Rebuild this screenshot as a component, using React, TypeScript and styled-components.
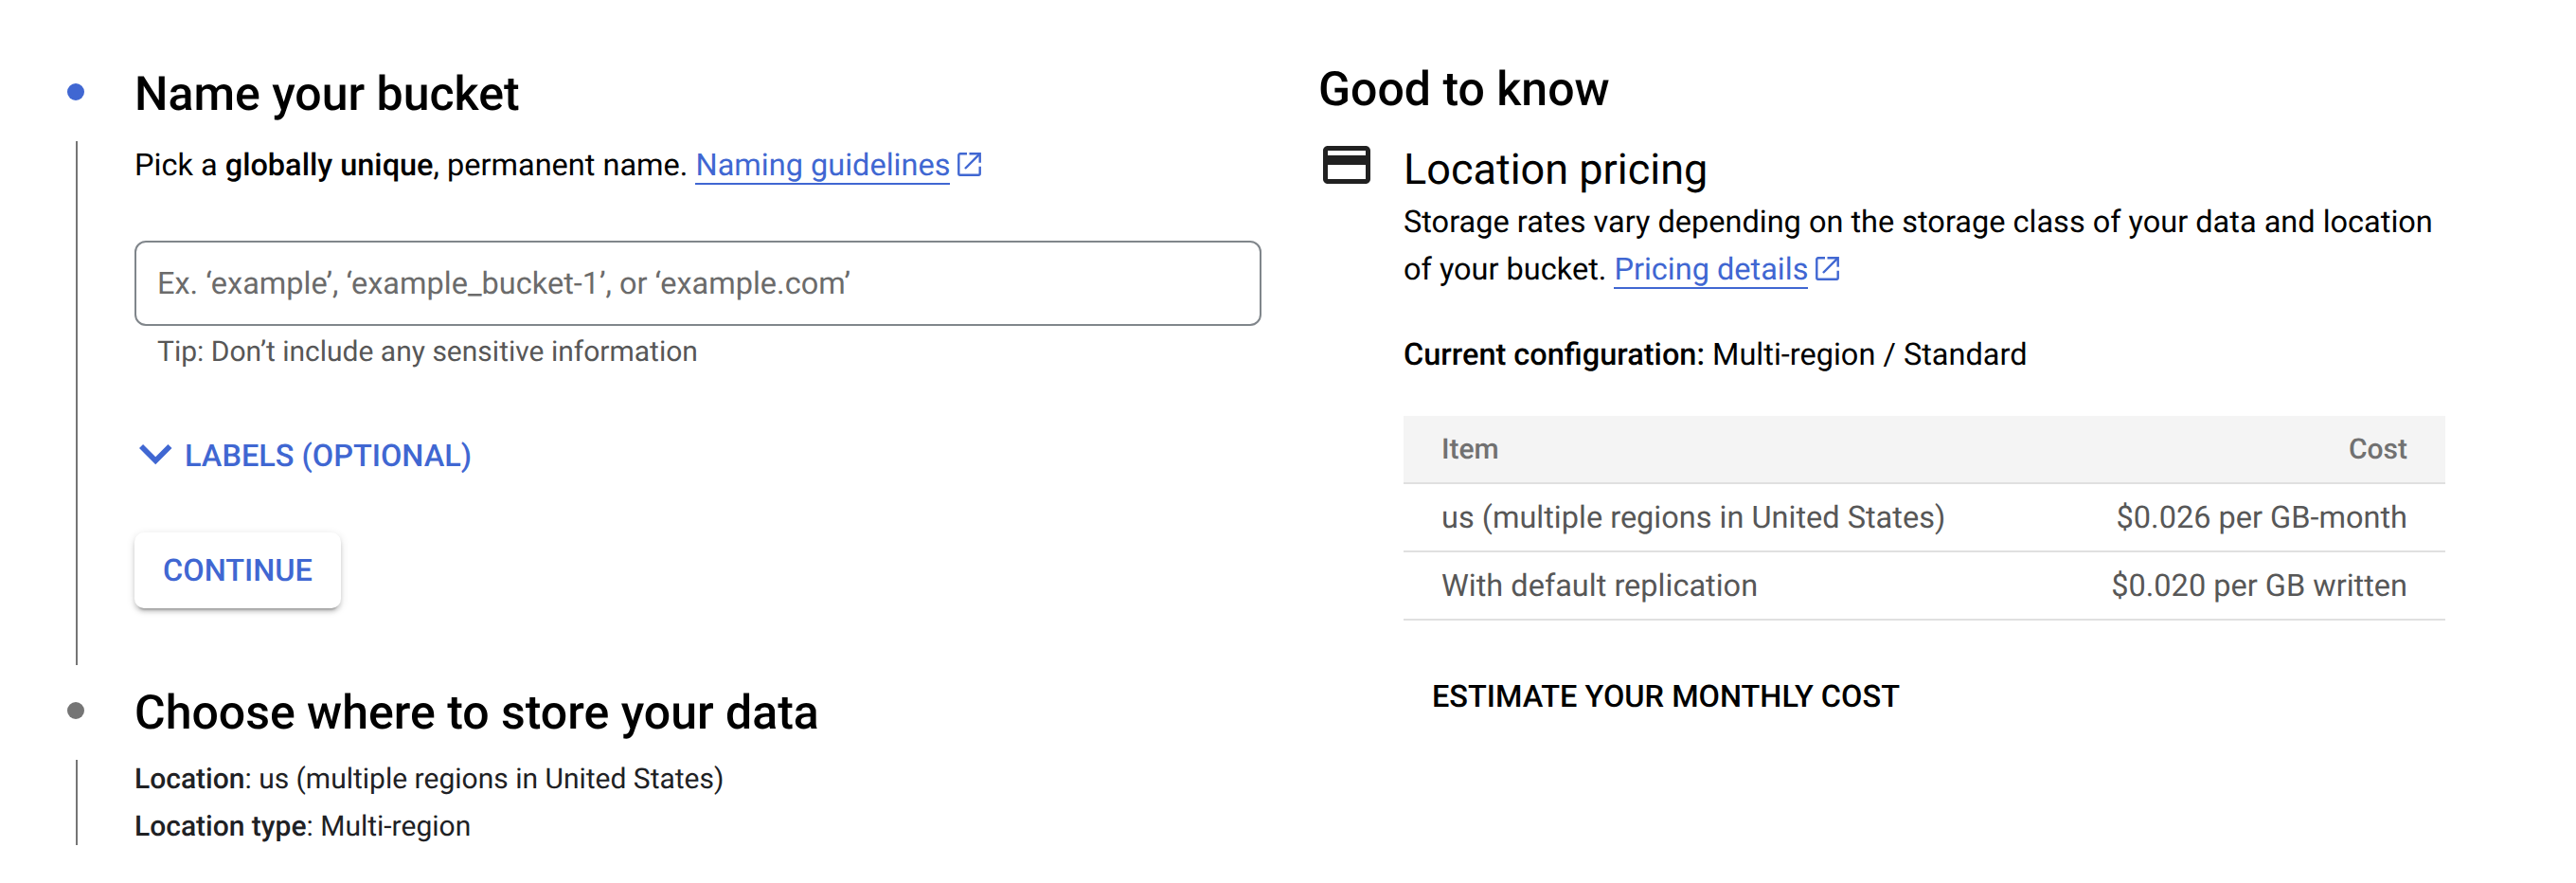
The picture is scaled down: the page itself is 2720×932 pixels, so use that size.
import React from 'react';
import styled, { createGlobalStyle } from 'styled-components';

const BLUE = '#4067d2';

const GlobalStyle = createGlobalStyle`
  body {
    margin: 0;
    background: #fff;
    color: #000;
    font-family: Roboto, 'Liberation Sans', sans-serif;
    font-size: 32.5px;
    line-height: 50px;
    text-rendering: geometricPrecision;
  }
`;

const Page = styled.main`
  box-sizing: border-box;
  display: flex;
  align-items: flex-start;
  gap: 60px;
  width: 2720px;
  height: 932px;
  padding: 64px 0 0 70px;
  overflow: hidden;
`;

const Stepper = styled.section`
  display: flex;
  flex-direction: column;
  gap: 20px;
  padding-top: 5px;
`;

const Step = styled.article`
  display: flex;
`;

const Rail = styled.div`
  display: flex;
  flex-direction: column;
  width: 72px;
  padding-top: 18.5px;
`;

const Dot = styled.span<{ $active?: boolean }>`
  width: 18px;
  height: 18px;
  margin-left: 0.5px;
  border-radius: 50%;
  background: ${(p) => (p.$active ? BLUE : '#757575')};
`;

const Line = styled.span`
  flex: 1;
  width: 2px;
  margin: 43.5px 0 0 10px;
  background: #757575;
`;

const StepBody = styled.div<{ $bottom: number }>`
  width: 1190px;
  padding-bottom: ${(p) => p.$bottom}px;
`;

const Heading = styled.h2`
  box-sizing: border-box;
  height: 60px;
  margin: 0;
  padding-top: 1px;
  font-size: 50px;
  font-weight: 500;
  line-height: 60px;
`;

const Paragraph = styled.p<{ $top: number }>`
  margin: ${(p) => p.$top}px 0 0;
`;

const Strong = styled.strong`
  font-weight: 500;
`;

const Link = styled.a`
  color: ${BLUE};
  text-decoration: none;
  border-bottom: 2px solid ${BLUE};
`;

const LinkIcon = styled.svg`
  width: 25px;
  height: 25px;
  margin-left: 8px;
  vertical-align: -1px;
`;

const NameField = styled.input`
  display: block;
  box-sizing: border-box;
  width: 100%;
  height: 90px;
  margin: 55px 0 0;
  padding: 0 22px;
  border: 2px solid #80868b;
  border-radius: 12px;
  background: transparent;
  font: inherit;
  text-rendering: inherit;
  outline: none;

  &::placeholder {
    color: #6b6b6b;
    opacity: 1;
  }
`;

const Tip = styled.p`
  margin: 3px 0 0 24px;
  color: #575757;
  font-size: 30px;
  line-height: 49px;
`;

const LabelsToggle = styled.button`
  display: flex;
  align-items: center;
  gap: 13.5px;
  margin: 60px 0 0;
  padding: 0 0 0 5px;
  border: 0;
  background: none;
  color: ${BLUE};
  font: inherit;
  font-weight: 500;
  text-rendering: inherit;
`;

const Chevron = styled.svg`
  width: 34.5px;
  height: 21.3px;
  margin-bottom: 2px;
`;

const ContinueButton = styled.button`
  display: block;
  width: 218px;
  height: 80px;
  margin: 56px 0 0;
  padding: 0;
  border: 0;
  border-radius: 10px;
  background: #fff;
  color: ${BLUE};
  font: inherit;
  font-weight: 500;
  text-rendering: inherit;
  box-shadow:
    0 6px 2px -4px rgba(0, 0, 0, 0.2),
    0 4px 4px rgba(0, 0, 0, 0.14),
    0 2px 10px rgba(0, 0, 0, 0.12);
`;

const Summary = styled.div`
  display: flex;
  flex-direction: column;
  gap: 11px;
  margin-top: 21px;
  color: #202124;
  font-size: 30px;
  line-height: 39px;
`;

const Aside = styled.aside`
  width: 1190px;
`;

const Topic = styled.div`
  display: flex;
  align-items: flex-start;
  gap: 30px;
  margin-top: 20px;
`;

const CardIcon = styled.svg`
  flex: none;
  width: 60px;
  height: 60px;
`;

const TopicBody = styled.div`
  width: 1100px;
  padding-top: 8px;
`;

const TopicTitle = styled.h3`
  margin: 0;
  font-size: 45px;
  font-weight: 400;
  line-height: 53px;
`;

const CostTable = styled.div`
  margin-top: 40px;
`;

const CostRow = styled.div<{ $head?: boolean }>`
  display: flex;
  justify-content: space-between;
  box-sizing: border-box;
  height: 72px;
  padding: 10px 40px 0;
  border-bottom: 2px solid #e0e0e0;
  background: ${(p) => (p.$head ? '#f4f4f4' : 'transparent')};
  color: ${(p) => (p.$head ? '#717171' : '#575757')};
  font-size: ${(p) => (p.$head ? 30 : 32.5)}px;
  font-weight: ${(p) => (p.$head ? 500 : 400)};
  line-height: ${(p) => (p.$head ? 51 : 50)}px;
`;

const EstimateButton = styled.button`
  display: block;
  margin: 55px 0 0;
  padding: 0 30px;
  border: 0;
  background: none;
  color: #000;
  font: inherit;
  font-weight: 500;
  text-rendering: inherit;
`;

function ExternalLink({ children }: { children: React.ReactNode }) {
  return (
    <>
      <Link>{children}</Link>
      <LinkIcon viewBox="0 0 25 25" fill="none" stroke={BLUE} strokeWidth="2.4" aria-hidden="true">
        <path d="M10 1.3H2.8A1.5 1.5 0 0 0 1.3 2.8V22.2A1.5 1.5 0 0 0 2.8 23.7H22.2A1.5 1.5 0 0 0 23.7 22.2V14.7" />
        <path d="M12.5 1.3H23.7V10.7" />
        <path d="M23.3 1.7L8 17" />
      </LinkIcon>
    </>
  );
}

const costs = [
  { item: 'us (multiple regions in United States)', cost: '$0.026 per GB-month' },
  { item: 'With default replication', cost: '$0.020 per GB written' },
];

export default function App() {
  return (
    <>
      <GlobalStyle />
      <Page>
        <Stepper>
          <Step>
            <Rail>
              <Dot $active />
              <Line />
            </Rail>
            <StepBody $bottom={60}>
              <Heading>Name your bucket</Heading>
              <Paragraph $top={20}>
                Pick a <Strong>globally unique</Strong>, permanent name.{' '}
                <ExternalLink>Naming guidelines</ExternalLink>
              </Paragraph>
              <NameField placeholder="Ex. ‘example’, ‘example_bucket-1’, or ‘example.com’" />
              <Tip>Tip: Don’t include any sensitive information</Tip>
              <LabelsToggle>
                <Chevron viewBox="6 8.59 12 7.41" fill={BLUE} aria-hidden="true">
                  <path d="M16.59 8.59L12 13.17 7.41 8.59 6 10l6 6 6-6z" />
                </Chevron>
                LABELS (OPTIONAL)
              </LabelsToggle>
              <ContinueButton>CONTINUE</ContinueButton>
            </StepBody>
          </Step>
          <Step>
            <Rail>
              <Dot />
              <Line />
            </Rail>
            <StepBody $bottom={0}>
              <Heading>Choose where to store your data</Heading>
              <Summary>
                <div>
                  <Strong>Location</Strong>: us (multiple regions in United States)
                </div>
                <div>
                  <Strong>Location type</Strong>: Multi-region
                </div>
              </Summary>
            </StepBody>
          </Step>
        </Stepper>
        <Aside>
          <Heading>Good to know</Heading>
          <Topic>
            <CardIcon viewBox="0 0 24 24" fill="#212121" aria-hidden="true">
              <path d="M20 4H4c-1.11 0-1.99.89-1.99 2L2 18c0 1.11.89 2 2 2h16c1.11 0 2-.89 2-2V6c0-1.11-.89-2-2-2zm0 14H4v-6h16v6zm0-10H4V6h16v2z" />
            </CardIcon>
            <TopicBody>
              <TopicTitle>Location pricing</TopicTitle>
              <Paragraph $top={4}>
                Storage rates vary depending on the storage class of your data and location of your bucket.{' '}
                <ExternalLink>Pricing details</ExternalLink>
              </Paragraph>
              <Paragraph $top={40}>
                <Strong>Current configuration:</Strong> Multi-region / Standard
              </Paragraph>
              <CostTable>
                <CostRow $head>
                  <span>Item</span>
                  <span>Cost</span>
                </CostRow>
                {costs.map((row) => (
                  <CostRow key={row.item}>
                    <span>{row.item}</span>
                    <span>{row.cost}</span>
                  </CostRow>
                ))}
              </CostTable>
              <EstimateButton>ESTIMATE YOUR MONTHLY COST</EstimateButton>
            </TopicBody>
          </Topic>
        </Aside>
      </Page>
    </>
  );
}
